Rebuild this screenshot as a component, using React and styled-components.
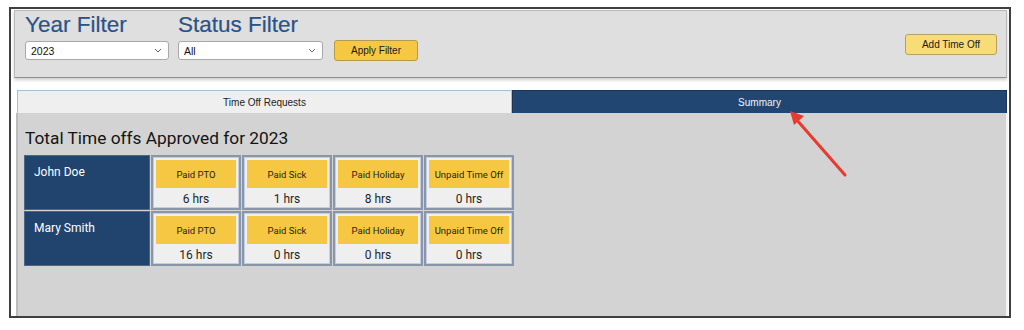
import React from "react";
import styled, { createGlobalStyle } from "styled-components";

const GlobalStyle = createGlobalStyle`
  html, body {
    margin: 0;
    padding: 0;
    background: #ffffff;
  }
  body {
    font-family: "Liberation Sans", Arial, sans-serif;
  }
`;

const employees = [
  {
    name: "John Doe",
    hours: [
      { label: "Paid PTO", value: 6 },
      { label: "Paid Sick", value: 1 },
      { label: "Paid Holiday", value: 8 },
      { label: "Unpaid Time Off", value: 0 },
    ],
  },
  {
    name: "Mary Smith",
    hours: [
      { label: "Paid PTO", value: 16 },
      { label: "Paid Sick", value: 0 },
      { label: "Paid Holiday", value: 0 },
      { label: "Unpaid Time Off", value: 0 },
    ],
  },
];

function Chevron() {
  return (
    <svg width="8" height="5" viewBox="0 0 8 5" fill="none">
      <path d="M1 1l3 3 3-3" stroke="#666" strokeWidth="1" />
    </svg>
  );
}

function App() {
  return (
    <>
      <GlobalStyle />
      <Frame>
        <FilterPanel>
          <FilterGroup>
            <FilterTitle>Year Filter</FilterTitle>
            <Select $width={144}>
              <span>2023</span>
              <Chevron />
            </Select>
          </FilterGroup>
          <FilterGroup>
            <FilterTitle>Status Filter</FilterTitle>
            <Select $width={145}>
              <span>All</span>
              <Chevron />
            </Select>
          </FilterGroup>
          <ApplyButton>Apply Filter</ApplyButton>
          <AddButton>Add Time Off</AddButton>
        </FilterPanel>

        <Tabs>
          <Tab>Time Off Requests</Tab>
          <Tab $active>Summary</Tab>
        </Tabs>

        <Content>
          <Title>Total Time offs Approved for 2023</Title>
          <SummaryTable>
            {employees.map((emp) => (
              <Row key={emp.name}>
                <NameCell>{emp.name}</NameCell>
                {emp.hours.map((h) => (
                  <HourCard key={h.label}>
                    <HourLabel>{h.label}</HourLabel>
                    <HourValue>{h.value} hrs</HourValue>
                  </HourCard>
                ))}
              </Row>
            ))}
          </SummaryTable>
        </Content>

        <Arrow width="70" height="75" viewBox="0 0 70 75">
          <line x1="63" y1="70" x2="14" y2="14" stroke="#e63b2e" strokeWidth="3" strokeLinecap="round" />
          <polygon points="8,6 22,11 12,20" fill="#e63b2e" />
        </Arrow>
      </Frame>
    </>
  );
}

const Frame = styled.div`
  position: relative;
  box-sizing: border-box;
  margin: 7px 0 0 9px;
  width: 1002px;
  height: 311px;
  border: 2px solid #3f3f3f;
  background: #ffffff;
  display: flex;
  flex-direction: column;
`;

const FilterPanel = styled.div`
  box-sizing: border-box;
  margin: 1px 2px 0 3px;
  height: 68px;
  padding: 2px 9px 0 10px;
  background: #dfdfdf;
  border: 1px solid #b9b9b9;
  border-bottom-color: #8f8f8f;
  box-shadow: 0 2px 3px rgba(0, 0, 0, 0.2);
  display: flex;
  align-items: flex-start;
  gap: 9px;
`;

const FilterGroup = styled.div`
  display: flex;
  flex-direction: column;
  gap: 4px;
`;

const FilterTitle = styled.h2`
  margin: 0;
  font-size: 22.5px;
  line-height: 24px;
  font-weight: 400;
  color: #2b5386;
  -webkit-text-stroke: 0.2px #2b5386;
`;

const Select = styled.div`
  box-sizing: border-box;
  width: ${(p) => p.$width}px;
  height: 19px;
  padding: 0 6px 0 5px;
  background: #ffffff;
  border: 1px solid #a9a9a9;
  border-radius: 3px;
  display: flex;
  align-items: center;
  justify-content: space-between;
  font-size: 10.5px;
  color: #111;
`;

const ApplyButton = styled.button`
  box-sizing: border-box;
  margin: 27px 0 0 2px;
  width: 84px;
  height: 21px;
  padding: 0;
  background: #f5c742;
  border: 1px solid #b59a4a;
  border-radius: 3px;
  font-family: "Liberation Sans", Arial, sans-serif;
  font-size: 10px;
  color: #1a1a1a;
`;

const AddButton = styled.button`
  box-sizing: border-box;
  margin: 21px 0 0 auto;
  width: 92px;
  height: 21px;
  padding: 0;
  background: #f8dc78;
  border: 1px solid #b5a165;
  border-radius: 3px;
  font-family: "Liberation Sans", Arial, sans-serif;
  font-size: 10px;
  color: #1a1a1a;
`;

const Tabs = styled.div`
  display: flex;
  margin: 12px 2px 0 6px;
  height: 23px;
`;

const Tab = styled.div`
  flex: 1;
  box-sizing: border-box;
  display: flex;
  align-items: center;
  justify-content: center;
  font-size: 10px;
  color: ${(p) => (p.$active ? "#f2f4f8" : "#222")};
  background: ${(p) => (p.$active ? "#214672" : "#efefef")};
  border: 1px solid ${(p) => (p.$active ? "#1a3558" : "#a9bed3")};
  border-bottom: none;
`;

const Content = styled.div`
  flex: 1;
  margin: 0 1px 0 5px;
  padding: 14px 0 0 7px;
  background: #d3d3d3;
  border-left: 2px solid #bcbcbc;
  border-right: 2px solid #f4f4f4;
  font-family: Roboto, "Liberation Sans", sans-serif;
`;

const Title = styled.h1`
  margin: 0 0 6px;
  font-size: 17.3px;
  line-height: 22px;
  font-weight: 400;
  color: #141414;
`;

const SummaryTable = styled.div`
  display: flex;
  flex-direction: column;
  gap: 1px;
  margin-left: -1px;
`;

const Row = styled.div`
  display: flex;
  gap: 1px;
  height: 55px;
`;

const NameCell = styled.div`
  box-sizing: border-box;
  width: 126px;
  padding: 9px 0 0 9px;
  background: #21446f;
  border: 1px solid #4d6586;
  color: #ffffff;
  font-size: 12px;
`;

const HourCard = styled.div`
  box-sizing: border-box;
  width: 90px;
  padding: 3px 3px 0;
  background: #efefef;
  border: 2px solid #8796ad;
  box-shadow: inset 0 0 0 1px #c6cedb;
  display: flex;
  flex-direction: column;
`;

const HourLabel = styled.div`
  height: 28px;
  display: flex;
  align-items: center;
  justify-content: center;
  background: #f5c742;
  font-size: 9.5px;
  color: #1f1f1f;
`;

const HourValue = styled.div`
  flex: 1;
  padding-top: 2px;
  display: flex;
  align-items: center;
  justify-content: center;
  font-size: 12px;
  color: #1f1f1f;
`;

const Arrow = styled.svg`
  position: absolute;
  left: 771px;
  top: 96px;
`;

export default App;
